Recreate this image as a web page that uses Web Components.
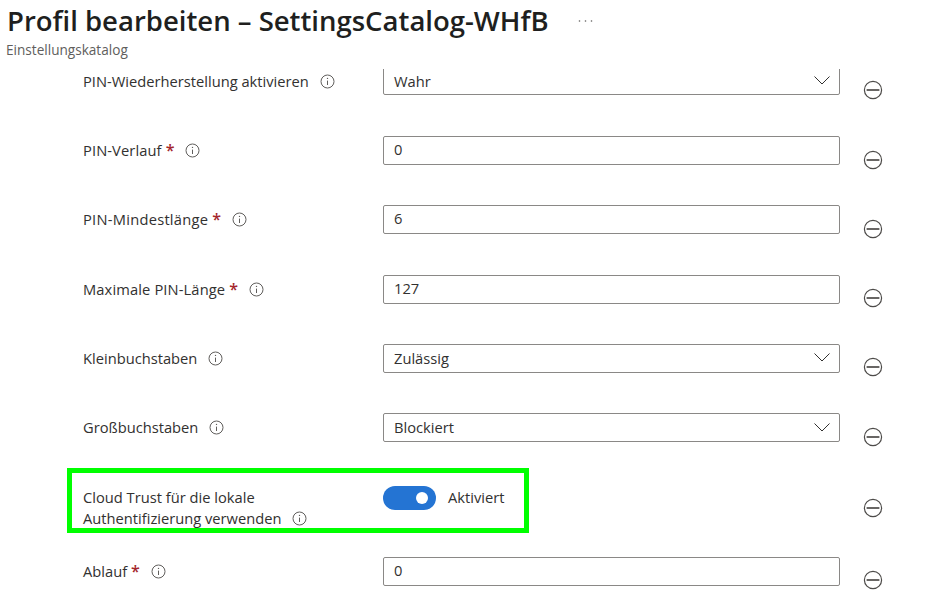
<!DOCTYPE html>
<html lang="de">
<head>
<meta charset="utf-8">
<title>Profil bearbeiten</title>
<style>
    html, body {
        margin: 0;
        height: 100%;
        background: #fff;
        overflow: hidden;
        font-family: "Open Sans", "Noto Sans", sans-serif;
        color: #323130;
    }
</style>
</head>
<body>
<profile-page>
    <blade-header slot="header" title-text="Profil bearbeiten – SettingsCatalog-WHfB" subtitle="Einstellungskatalog"></blade-header>

    <setting-row label="PIN-Wiederherstellung aktivieren"><drop-down value="Wahr" style="height:28px;padding-bottom:0"></drop-down></setting-row>
    <setting-row label="PIN-Verlauf" required style="--label-spacing:.1px"><text-field value="0"></text-field></setting-row>
    <setting-row label="PIN-Mindestlänge" required style="--label-spacing:.25px"><text-field value="6"></text-field></setting-row>
    <setting-row label="Maximale PIN-Länge" required style="--label-spacing:.12px"><text-field value="127"></text-field></setting-row>
    <setting-row label="Kleinbuchstaben"><drop-down value="Zulässig"></drop-down></setting-row>
    <setting-row label="Großbuchstaben"><drop-down value="Blockiert"></drop-down></setting-row>
    <setting-row tall label="Cloud Trust für die lokale Authentifizierung verwenden"><toggle-switch label="Aktiviert"></toggle-switch></setting-row>
    <setting-row label="Ablauf" required><text-field value="0"></text-field></setting-row>

    <mark-box slot="overlay"></mark-box>
</profile-page>

<script>
customElements.define('profile-page', class extends HTMLElement {
    constructor() {
        super()
        this.attachShadow({ mode: 'open' })
        this.shadowRoot.innerHTML = `
            <style>
                :host {
                    display: flex;
                    flex-direction: column;
                    position: relative;
                    width: 932px;
                    height: 610px;
                    overflow: hidden;
                }
                #list {
                    flex: 1;
                    min-height: 0;
                    overflow: hidden;
                    padding-left: 83px;
                }
                /* the list is scrolled a bit, first row is cut off at the top */
                #inner {
                    margin-top: -2.33px;
                }
            </style>
            <slot name="header"></slot>
            <div id="list"><div id="inner"><slot></slot></div></div>
            <slot name="overlay"></slot>
        `
    }
})

customElements.define('blade-header', class extends HTMLElement {
    constructor() {
        super()
        this.attachShadow({ mode: 'open' })
        let titleText = this.getAttribute('title-text')
        let subtitle = this.getAttribute('subtitle')
        this.shadowRoot.innerHTML = `
            <style>
                :host {
                    display: block;
                    height: 69px;
                    padding-left: 7px;
                    box-sizing: border-box;
                }
                #top {
                    display: flex;
                    align-items: center;
                    height: 42px;
                }
                h1 {
                    margin: 0;
                    font-size: 27.5px;
                    line-height: 42px;
                    font-weight: 600;
                    color: #201f1e;
                    white-space: nowrap;
                }
                svg {
                    margin-left: 29px;
                    flex: none;
                }
                #sub {
                    font-size: 13.6px;
                    line-height: 16px;
                    color: #605e5c;
                    margin-left: -1px;
                }
            </style>
            <div id="top">
                <h1>${titleText}</h1>
                <svg width="15" height="4" viewBox="0 0 15 4"><g fill="#605e5c"><circle cx="1.5" cy="2" r=".8"/><circle cx="7.5" cy="2" r=".8"/><circle cx="13.5" cy="2" r=".8"/></g></svg>
            </div>
            <div id="sub">${subtitle}</div>
        `
    }
})

customElements.define('info-icon', class extends HTMLElement {
    constructor() {
        super()
        this.attachShadow({ mode: 'open' })
        this.shadowRoot.innerHTML = `
            <style>
                :host { display: inline-block; width: 15px; height: 15px; vertical-align: -2px; }
                svg { display: block; }
            </style>
            <svg width="15" height="15" viewBox="0 0 15 15" fill="none" stroke="#605e5c">
                <circle cx="7.5" cy="7.5" r="6.5"/>
                <path d="M7.5 6.6v4.4" />
                <circle cx="7.5" cy="4.4" r=".7" fill="#605e5c" stroke="none"/>
            </svg>
        `
    }
})

customElements.define('remove-icon', class extends HTMLElement {
    constructor() {
        super()
        this.attachShadow({ mode: 'open' })
        this.shadowRoot.innerHTML = `
            <style>
                :host { display: block; width: 20px; height: 20px; }
                svg { display: block; }
            </style>
            <svg width="20" height="20" viewBox="0 0 20 20" fill="none" stroke="#4d4b49" stroke-width="1.2">
                <circle cx="10" cy="10" r="8.6"/>
                <path d="M3.6 10h12.8" stroke-width="1.7"/>
            </svg>
        `
    }
})

customElements.define('setting-row', class extends HTMLElement {
    constructor() {
        super()
        this.attachShadow({ mode: 'open' })
        let label = this.getAttribute('label')
        let star = this.hasAttribute('required') ? '<span id="star">*</span>' : ''
        this.shadowRoot.innerHTML = `
            <style>
                :host {
                    display: grid;
                    grid-template-columns: 300px 457px 20px;
                    height: 69.33px;
                    font-size: 14.7px;
                    color: #323130;
                }
                :host([tall]) {
                    height: 74.33px;
                    padding-top: 3.5px;
                    box-sizing: border-box;
                }
                #label {
                    line-height: 21px;
                    padding-top: 4px;
                    width: 270px;
                    letter-spacing: var(--label-spacing, 0);
                }
                :host([tall]) #label { padding-top: .5px; }
                #star { color: #a4262c; margin-left: 4px; font-weight: 600; font-size: 16px; }
                info-icon { margin-left: 7px; }
                #control { height: 29px; }
                remove-icon {
                    margin: 13.5px 0 0 23px;
                }
                :host([tall]) remove-icon { margin-top: 12px; }
            </style>
            <div id="label">${label}${star} <info-icon></info-icon></div>
            <div id="control"><slot></slot></div>
            <remove-icon></remove-icon>
        `
    }
})

customElements.define('text-field', class extends HTMLElement {
    constructor() {
        super()
        this.attachShadow({ mode: 'open' })
        this.shadowRoot.innerHTML = `
            <style>
                :host {
                    display: block;
                    height: 29px;
                    box-sizing: border-box;
                    border: 1px solid #8a8886;
                    border-radius: 2px;
                    padding-left: 10px;
                    font-size: 14.7px;
                    line-height: 25px;
                }
            </style>
            <span>${this.getAttribute('value')}</span>
        `
    }
})

customElements.define('drop-down', class extends HTMLElement {
    constructor() {
        super()
        this.attachShadow({ mode: 'open' })
        this.shadowRoot.innerHTML = `
            <style>
                :host {
                    display: flex;
                    align-items: center;
                    justify-content: space-between;
                    height: 29px;
                    box-sizing: border-box;
                    border: 1px solid #8a8886;
                    border-radius: 2px;
                    padding: 0 9px 1px 10px;
                    font-size: 14.7px;
                }
                svg { flex: none; }
            </style>
            <span>${this.getAttribute('value')}</span>
            <svg width="16" height="9" viewBox="0 0 16 9" fill="none" stroke="#323130" stroke-width="1"><path d="M.5.5 8 8 15.5.5"/></svg>
        `
    }
})

customElements.define('toggle-switch', class extends HTMLElement {
    constructor() {
        super()
        this.attachShadow({ mode: 'open' })
        this.shadowRoot.innerHTML = `
            <style>
                :host {
                    display: flex;
                    align-items: center;
                    gap: 12px;
                    height: 24px;
                    font-size: 14.7px;
                }
                #track {
                    display: flex;
                    align-items: center;
                    justify-content: flex-end;
                    width: 53px;
                    height: 24px;
                    padding-right: 8px;
                    box-sizing: border-box;
                    border-radius: 12px;
                    background: #2474d3;
                }
                #thumb {
                    width: 12px;
                    height: 12px;
                    border-radius: 50%;
                    background: #fff;
                }
                span { margin-top: -2px; }
            </style>
            <div id="track"><div id="thumb"></div></div>
            <span>${this.getAttribute('label')}</span>
        `
    }
})

customElements.define('mark-box', class extends HTMLElement {
    constructor() {
        super()
        this.attachShadow({ mode: 'open' })
        this.shadowRoot.innerHTML = `
            <style>
                :host {
                    position: absolute;
                    left: 67px;
                    top: 468px;
                    width: 462px;
                    height: 65px;
                    box-sizing: border-box;
                    border: 5px solid #00ff00;
                }
            </style>
        `
    }
})
</script>
</body>
</html>
